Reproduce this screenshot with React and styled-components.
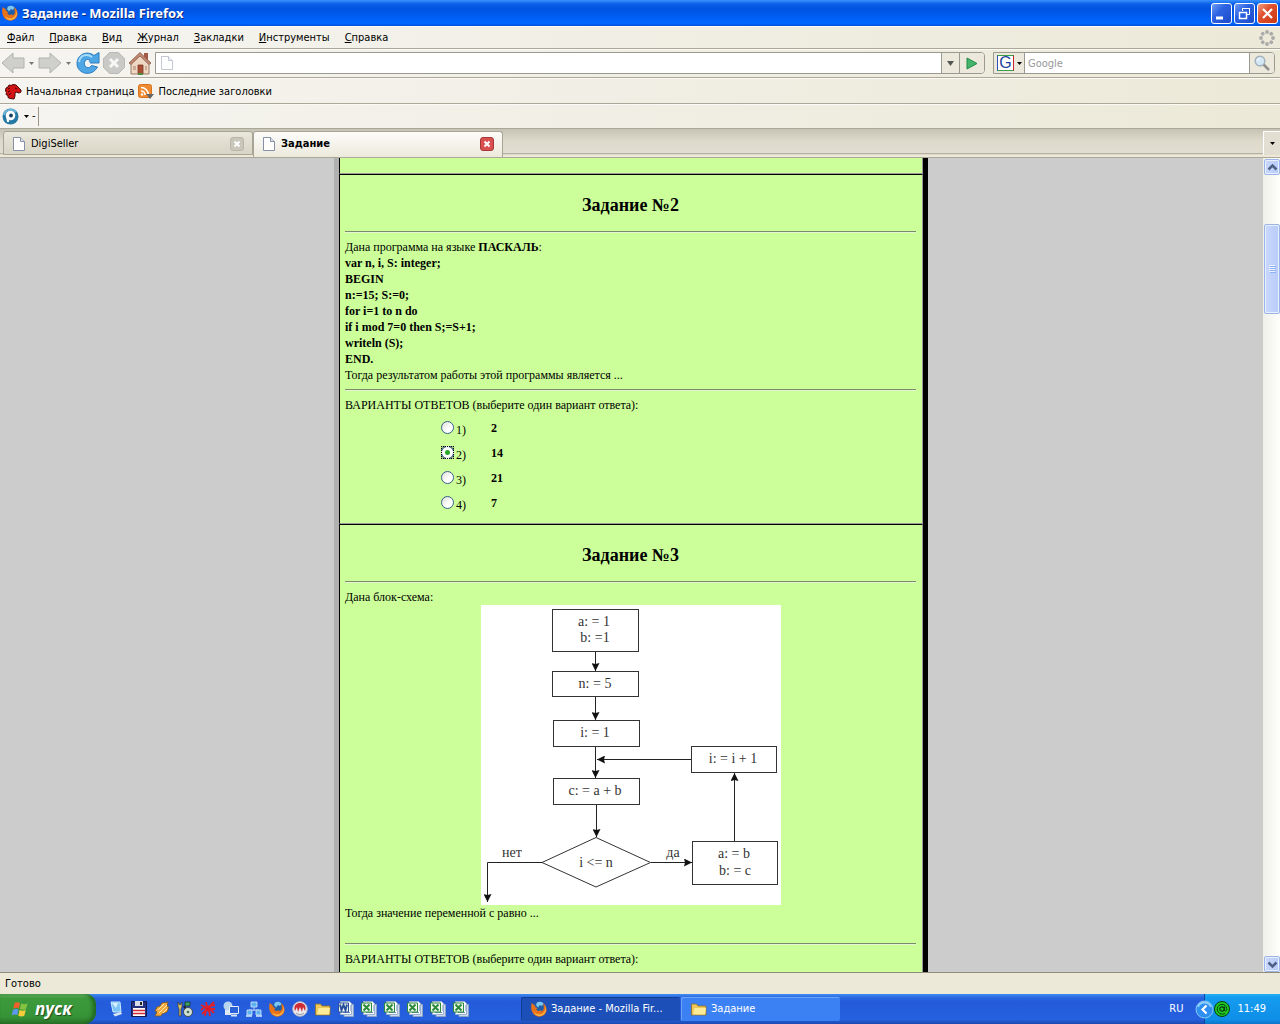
import React from 'react';
import styled, { createGlobalStyle, css } from 'styled-components';

const tasks = [
  { id: 2, options: ['2', '14', '21', '7'] },
  { id: 3, options: [] },
];

const menuItems = ['Файл', 'Правка', 'Вид', 'Журнал', 'Закладки', 'Инструменты', 'Справка'];

const program = [
  'var n, i, S: integer;',
  'BEGIN',
  'n:=15; S:=0;',
  'for i=1 to n do',
  'if i mod 7=0 then S;=S+1;',
  'writeln (S);',
  'END.',
];

const App = () => (
  <Window>
    <GlobalStyle />
    <TitleBar>
      <FirefoxIcon />
      <WindowTitle>Задание - Mozilla Firefox</WindowTitle>
      <WindowButton aria-label="Свернуть">
        <svg width="21" height="21">
          <path d="M5 15h7" stroke="#fff" strokeWidth="3" />
        </svg>
      </WindowButton>
      <WindowButton aria-label="Восстановить">
        <svg width="21" height="21" fill="none" stroke="#fff">
          <path d="M8.5 8V5.5h7v6H13M8 5.5h8" />
          <path d="M5.5 9.5h7v6h-7zM5 9.5h8" strokeWidth="1.5" />
        </svg>
      </WindowButton>
      <WindowButton $close aria-label="Закрыть">
        <svg width="21" height="21">
          <path d="M6 6l9 9M15 6l-9 9" stroke="#fff" strokeWidth="2.2" />
        </svg>
      </WindowButton>
    </TitleBar>

    <MenuBar>
      {menuItems.map(item => (
        <MenuButton key={item}>
          <u>{item[0]}</u>
          {item.slice(1)}
        </MenuButton>
      ))}
      <Throbber />
    </MenuBar>

    <NavBar>
      <IconButton aria-label="Назад">
        <BackIcon />
      </IconButton>
      <CaretButton aria-label="История назад">
        <Caret color="#777" />
      </CaretButton>
      <IconButton aria-label="Вперёд">
        <BackIcon forward />
      </IconButton>
      <CaretButton aria-label="История вперёд">
        <Caret color="#777" />
      </CaretButton>
      <NavIcons>
        <IconButton aria-label="Обновить">
          <ReloadIcon />
        </IconButton>
        <IconButton aria-label="Остановить">
          <StopIcon />
        </IconButton>
        <IconButton aria-label="Домой">
          <HomeIcon />
        </IconButton>
      </NavIcons>
      <AddressBox>
        <PageIcon faded />
        <FieldInput aria-label="Адрес" />
        <FieldButton $width={18} aria-label="Список адресов">
          <Caret color="#555" wide />
        </FieldButton>
        <FieldButton $width={25} aria-label="Переход">
          <svg width="12" height="13">
            <path d="M1 1l10 5.5L1 12z" fill="#45b56b" stroke="#218a48" />
          </svg>
        </FieldButton>
      </AddressBox>
      <SearchBox>
        <EngineButton aria-label="Поисковая система">
          <GoogleMark>G</GoogleMark>
          <Caret color="#000" />
        </EngineButton>
        <FieldInput placeholder="Google" aria-label="Поиск" />
        <FieldButton $width={25} aria-label="Найти">
          <SearchIcon />
        </FieldButton>
      </SearchBox>
    </NavBar>

    <BookmarksBar>
      <Bookmark href="#home">
        <DragonIcon />
        Начальная страница
      </Bookmark>
      <Bookmark href="#news">
        <FeedIcon />
        Последние заголовки
      </Bookmark>
    </BookmarksBar>

    <ExtensionBar>
      <IconButton aria-label="Панель">
        <PandaIcon />
      </IconButton>
      <Caret color="#000" />
      <span>-</span>
      <Divider />
    </ExtensionBar>

    <TabStrip>
      <Tab>
        <PageIcon />
        <TabButton>DigiSeller</TabButton>
        <TabClose aria-label="Закрыть DigiSeller">
          <CrossIcon />
        </TabClose>
      </Tab>
      <Tab $active>
        <PageIcon />
        <TabButton>Задание</TabButton>
        <TabClose $active aria-label="Закрыть Задание">
          <CrossIcon />
        </TabClose>
      </Tab>
      <AllTabs aria-label="Все вкладки">
        <Caret color="#000" />
      </AllTabs>
    </TabStrip>

    <Viewport>
      <Page>
        <Sheet>
          <PreviousTask />
          <Task>
            <TaskTitle>Задание №{tasks[0].id}</TaskTitle>
            <Rule />
            <p>
              Дана программа на языке <b>ПАСКАЛЬ</b>:
            </p>
            {program.map(line => (
              <p key={line}>
                <b>{line}</b>
              </p>
            ))}
            <p>Тогда результатом работы этой программы является ...</p>
            <Rule />
            <p>ВАРИАНТЫ ОТВЕТОВ (выберите один вариант ответа):</p>
            <Options>
              {tasks[0].options.map((option, i) => (
                <Option key={option}>
                  <Radio name="task2" value={option} defaultChecked={i === 1} />
                  <OptionNumber>{i + 1})</OptionNumber>
                  <b>{option}</b>
                </Option>
              ))}
            </Options>
          </Task>
          <Task>
            <TaskTitle>Задание №{tasks[1].id}</TaskTitle>
            <Rule />
            <p>Дана блок-схема:</p>
            <Flowchart />
            <p>Тогда значение переменной с равно ...</p>
            <br />
            <Rule />
            <p>ВАРИАНТЫ ОТВЕТОВ (выберите один вариант ответа):</p>
          </Task>
        </Sheet>
      </Page>
      <ScrollBar>
        <ScrollButton aria-label="Вверх">
          <Chevron d="M3.500 9.500l4-4 4 4" />
        </ScrollButton>
        <ScrollTrack>
          <ScrollThumb>
            <svg width="7" height="8" stroke="#eef4fe">
              <path d="M0 .5h6M0 2.500h6M0 4.500h6M0 6.500h6" />
              <path d="M1 1.500h6M1 3.500h6M1 5.500h6M1 7.500h6" stroke="#8cb0f8" />
            </svg>
          </ScrollThumb>
        </ScrollTrack>
        <ScrollButton aria-label="Вниз">
          <Chevron d="M3.500 5.500l4 4 4-4" />
        </ScrollButton>
      </ScrollBar>
    </Viewport>

    <StatusBar>Готово</StatusBar>

    <TaskBar>
      <StartButton>
        <WindowsFlag />
        пуск
      </StartButton>
      <QuickLaunch>
        <DesktopIcon />
        <FloppyIcon />
        <WinampIcon />
        <ToolsIcon />
        <SpiderIcon />
        <RemoteIcon />
        <NetworkIcon />
        <FirefoxIcon />
        <NeroIcon />
        <FolderIcon />
        <OfficeIcon color="#2a4f9c" mark="M2 3.5l1.5 5.500 2-5 2 5L9 3.500" />
        {[0, 1, 2, 3, 4].map(i => (
          <OfficeIcon key={i} color="#2d8a3a" mark="M2.500 3.500l6 6M8.500 3.500l-6 6" />
        ))}
      </QuickLaunch>
      <TaskButton $active>
        <FirefoxIcon />
        <span>Задание - Mozilla Fir...</span>
      </TaskButton>
      <TaskButton>
        <FolderIcon />
        <span>Задание</span>
      </TaskButton>
      <Language>RU</Language>
      <Tray>
        <TrayToggle aria-label="Показать значки">
          <svg width="19" height="19" fill="none">
            <circle cx="9.5" cy="9.5" r="8.5" fill="#2f8ff0" stroke="#8cc8fa" />
            <path d="M3 7a7 7 0 0 1 13 0" stroke="#8ccdfc" strokeWidth="2" />
            <path d="M11.5 5.5l-4 4 4 4" stroke="#fff" strokeWidth="2.2" />
          </svg>
        </TrayToggle>
        <AgentIcon />
        <span>11:49</span>
      </Tray>
    </TaskBar>
  </Window>
);

export default App;

/* Icons */

const Caret = ({ color, wide }) => (
  <svg width="7" height="5">
    <path d={wide ? 'M0 0h7L3.5 5z' : 'M1 1h5L3.5 4z'} fill={color} />
  </svg>
);

const Chevron = ({ d }) => (
  <svg width="15" height="15" fill="none" stroke="#4d6185" strokeWidth="2.5">
    <path d={d} />
  </svg>
);

const CrossIcon = () => (
  <svg width="8" height="8">
    <path d="M1.5 1.5l5 5M6.5 1.5l-5 5" stroke="#fff" strokeWidth="2" />
  </svg>
);

const FirefoxIcon = () => (
  <svg width="16" height="16">
    <circle cx="8.5" cy="7" r="6.5" fill="#1f5fa8" />
    <path d="M6 1.500c2-1.500 5-1 6.500 1L11 5 9 4 7 6.500 5 4z" fill="#7cc6f2" />
    <path
      d="M.8 1.500C1.500 3 2 3 3 3.500L4.500 6c.5 1 1.500.8 2 1.300L5.300 8c.5 2 2.700 2.500 4.200 1.200 1 .2 1 .8.4 1.300 2.400-.2 3.400-2.500 2.700-5.500 0-1.500-.3-2.500-.8-3.200 3.900 2.600 5 7.800 2.300 11.100-3.500 3.900-9 3.600-12-.4C-.2 9.500-.2 5 .8 1.500z"
      fill="#e8711a"
    />
    <path d="M14 5c1 4-1 8-5 8.500-3 .4-5-1-6-3 .5 4 5 5.500 8.500 3.500C15 12 15.500 8 14 5z" fill="#f9c44c" />
  </svg>
);

const Throbber = () => (
  <ThrobberSvg width="16" height="16" fill="#aaa">
    {[0, 45, 90, 135, 180, 225, 270, 315].map(a => (
      <circle key={a} cx="8" cy="2" r="1.9" transform={`rotate(${a} 8 8)`} />
    ))}
  </ThrobberSvg>
);

const BackIcon = ({ forward }) => (
  <svg width="24" height="22">
    <path
      d="M1 11L12 1v5h11v10H12v5z"
      fill="#cfcfcb"
      stroke="#b3b3ae"
      transform={forward ? 'matrix(-1 0 0 1 24 0)' : undefined}
    />
  </svg>
);

const ReloadIcon = () => (
  <svg width="24" height="24">
    <path
      d="M18 4.5C11-1 1 3.500 1 12.500 1 23 16 26.500 21.500 16l-6-1.500c-2 3.500-7 2.500-7-2 0-4 3.500-5 5.500-3L11.500 12H23V1.500z"
      fill="#4fa6e4"
      stroke="#2a7cc0"
    />
    <path d="M3 11C4 4 11 2 16 6" stroke="#a8dcf8" strokeWidth="2" fill="none" />
    <circle cx="11.5" cy="12.5" r="2.5" fill="#eef4f8" />
  </svg>
);

const StopIcon = () => (
  <svg width="24" height="24">
    <path d="M7.5 1.500h9l6 6v9l-6 6h-9l-6-6v-9z" fill="#c9c9c6" stroke="#b9b9b5" />
    <path d="M8 8l8 8M16 8l-8 8" stroke="#f7f7f5" strokeWidth="3" />
  </svg>
);

const HomeIcon = () => (
  <svg width="24" height="24">
    <path d="M16 2h4v7h-4z" fill="#a55a48" />
    <path d="M3 11l9-8 9 8v12H3z" fill="#eed8c4" stroke="#9a7a68" />
    <path d="M1 12L12 1.500 23 12l-2 1.500-9-8.500-9 8.500z" fill="#c08872" stroke="#8d5a48" strokeWidth=".8" />
    <path d="M10 14h5v9h-5z" fill="#a84e35" stroke="#7e3a28" strokeWidth=".8" />
    <path d="M5 15h3v4H5zM17 15h2v4h-2z" fill="#c9ab96" />
    <path d="M10 23h5" stroke="#4d8a42" strokeWidth="2" />
  </svg>
);

const PageIcon = ({ faded }) => (
  <svg width="12" height="14" opacity={faded ? 0.5 : 1}>
    <path d="M.5.5h7l4 4v9H.5z" fill="#fff" stroke="#8791a5" />
    <path d="M7.5.5v4h4" fill="#dde3ee" stroke="#8791a5" />
  </svg>
);

const SearchIcon = () => (
  <svg width="16" height="16">
    <path d="M9 9l6 6" stroke="#8f8f8c" strokeWidth="2.5" />
    <circle cx="6" cy="6" r="4.8" fill="#d3e7f5" stroke="#a3b1bb" strokeWidth="1.4" />
    <path d="M3.5 6A2.500 2.500 0 0 1 6 3.500" stroke="#fff" fill="none" />
  </svg>
);

const DragonIcon = () => (
  <svg width="17" height="16">
    <path
      d="M1 4l2-1 1-2 2 .5L8 .5l3 .5 2 2 3 3v2l-2 1-3-1-1 1v3l-1 3-4-.5-2-1v-2l-2-1 .5-2L.5 7z"
      fill="#d41414"
      stroke="#4a0505"
    />
    <path d="M3 5l2-1M3 8l2-1M4 11l2-2M10 4l2 1" stroke="#400" fill="none" />
  </svg>
);

const FeedIcon = () => (
  <svg width="16" height="16" fill="none">
    <rect x=".5" y=".5" width="13" height="13" rx="2" fill="#f08a30" stroke="#d87320" />
    <path d="M3 7a4 4 0 0 1 4 4M3 3.500A7.500 7.500 0 0 1 10.500 11" stroke="#fff" strokeWidth="1.600" />
    <circle cx="4" cy="10.5" r="1.2" fill="#fff" />
    <path d="M8 10h8l-4 5z" fill="#666" />
  </svg>
);

const PandaIcon = () => (
  <svg width="17" height="17">
    <circle cx="8.5" cy="8.5" r="8" fill="#2679a5" />
    <path d="M2 7a7 7 0 0 1 12-3" stroke="#6bb8dc" strokeWidth="2" fill="none" />
    <circle cx="8.5" cy="7.5" r="4.8" fill="#fff" />
    <path d="M4 7h3v7H5z" fill="#fff" />
    <circle cx="9" cy="7.5" r="1.9" fill="#17415e" />
  </svg>
);

const WindowsFlag = () => (
  <svg width="18" height="17">
    <path d="M3.5 2C5.500.7 7 1 9 2L7.800 7.500C6 6.700 4.300 6.500 2.200 7.800z" fill="#f0602c" />
    <path d="M10 2.500c2 1 4 1 6.500 0L15 8.200c-2.200 1-4 .8-6.200-.2z" fill="#86c340" />
    <path d="M2 8.800C4 7.700 5.700 7.700 7.500 8.500L6.200 14C4.500 13.200 2.800 13.200.8 14.200z" fill="#5c98ee" />
    <path d="M8.600 9c2.200 1 4 1 6.200 0l-1.500 5.800c-2 1-4 .8-6-.2z" fill="#f8cc3a" />
  </svg>
);

const DesktopIcon = () => (
  <svg width="16" height="16">
    <path d="M3 1h9l1 10H5z" fill="#7cc5f5" stroke="#c9eafd" />
    <path d="M5 13l8-2 1 2-7 2.500z" fill="#d8e6f2" />
    <path d="M4 2l6 0-2 5z" fill="#d6f0ff" />
  </svg>
);

const FloppyIcon = () => (
  <svg width="16" height="16">
    <path d="M.5.5h15v15H.5z" fill="#25307e" stroke="#111b50" />
    <path d="M4 0h8v5H4z" fill="#d9dce6" />
    <path d="M9 1h2v3H9z" fill="#222" />
    <path d="M2 7h12v8H2z" fill="#fff" />
    <path d="M2 9.500h12M2 12.500h12" stroke="#d12b35" strokeWidth="1.5" />
  </svg>
);

const WinampIcon = () => (
  <svg width="16" height="16">
    <path d="M8 2l6-1-1 4 2 1-2 5-5 2-1 2-6 0 2-4-2-1 2-4 3-1z" fill="#f6a93c" stroke="#74551f" strokeWidth=".8" />
    <path d="M10 3L4 9M13 4l-8 8M13 8l-4 4" stroke="#fdebb0" />
  </svg>
);

const ToolsIcon = () => (
  <svg width="16" height="16">
    <path d="M1 1l2 3 2-3v5L4 8v7H2V8L1 6z" fill="#d4c56d" stroke="#333" strokeWidth=".7" />
    <path d="M8 1h5v4H8z" fill="#3aa356" stroke="#222" strokeWidth=".7" />
    <path d="M7 5l3 6" stroke="#222" strokeWidth="2" />
    <circle cx="11" cy="11" r="4.5" fill="#cfe0d4" stroke="#333" strokeWidth=".8" />
    <circle cx="11" cy="11" r="1.3" fill="#4c6a55" />
  </svg>
);

const SpiderIcon = () => (
  <svg width="16" height="16" fill="none" stroke="#e0202a" strokeWidth="1.8">
    <path d="M1 4l4 2-4 3M6 1l1 5M14 1l-4 4 5-1M2 13l4-4-1 6M9 9l1 6M14 12l-4-4 5 0" />
    <circle cx="8" cy="7.5" r="2" fill="#c8141e" />
  </svg>
);

const RemoteIcon = () => (
  <svg width="16" height="16">
    <circle cx="5" cy="5" r="4.5" fill="#b9d4f0" />
    <path d="M2 9h6v5H2z" fill="#dce8f5" />
    <path d="M6.5 5.500h9v7h-9z" fill="#2a62d8" stroke="#e5eefa" />
    <path d="M8 14.500h6" stroke="#dbe6f3" strokeWidth="2" />
  </svg>
);

const NetworkIcon = () => (
  <svg width="16" height="16" stroke="#d6e9fb" strokeWidth=".8">
    <path d="M8 6v4M3 12V9h10v3" fill="none" />
    <path d="M5 1h6v5H5zM1 9h5v5H1zM10 9h5v5h-5z" fill="#5db1ee" />
    <path d="M0 15h6M10 15h6" strokeWidth="1.5" />
  </svg>
);

const NeroIcon = () => (
  <svg width="16" height="16">
    <circle cx="8" cy="8" r="7.3" fill="#e9e9ee" stroke="#b8b8c4" />
    <path d="M3 10c-2-6 2-8 5-8s7 2 5 8l-2-4-1 5-2-5-2 5-1-5z" fill="#d02a35" />
    <path d="M4 12c2 2 6 2 8 0" stroke="#9a9aa8" fill="none" />
  </svg>
);

const FolderIcon = () => (
  <svg width="16" height="16">
    <path d="M.5 14V3h5L7 5h8v9z" fill="#f0c85a" stroke="#8f7022" strokeWidth=".8" />
    <path d="M2 13.500L3.500 7H15l-1 6.500z" fill="#fdeb97" />
  </svg>
);

const OfficeIcon = ({ color, mark }) => (
  <svg width="16" height="16" fill="none">
    <path d="M6 3.500h9.500v12H6z" fill="#c9daf2" stroke="#8aa2c4" />
    <path d="M2.500.5h9l2 2v11h-11z" fill="#f7fafe" stroke="#9cb0cc" />
    <path d="M12 5h1M12 7h1M12 9h1M5 11.500h7" stroke="#6d8fc0" />
    <path d="M.5 2h10v9H.5z" fill="#eef6ec" stroke={color} />
    <path d={mark} stroke={color} strokeWidth="2" />
  </svg>
);

const AgentIcon = () => (
  <svg width="16" height="16" fill="none">
    <circle cx="8" cy="8" r="7.5" fill="#1fc825" stroke="#063f08" />
    <circle cx="8" cy="8" r="2.2" stroke="#053c07" strokeWidth="1.2" />
    <path d="M10.5 5.500v4c1 1.500 2.500 0 2.200-2C12 2 4 2 3.300 7.500 3 12.500 7.500 14 11 12.500" stroke="#053c07" />
  </svg>
);

const Box = ({ x, y, w = 86, h = 26 }) => <rect x={x} y={y} width={w} height={h} fill="none" />;

const Arrow = ({ d }) => <path d={d} stroke="#222" fill="none" markerEnd="url(#arrow)" />;

const Flowchart = () => (
  <Chart width="300" height="300" role="img" aria-label="Блок-схема">
    <defs>
      <marker id="arrow" markerWidth="9" markerHeight="8" refX="8" refY="4" orient="auto" markerUnits="userSpaceOnUse">
        <path d="M0 0l8 4-8 4 1-4z" fill="#111" />
      </marker>
    </defs>
    <g stroke="#333">
      <Box x="71.5" y="4.5" h={42} />
      <Box x="71.5" y="66.5" h={25} />
      <Box x="72.5" y="115.5" />
      <Box x="72.5" y="173.5" />
      <Box x="210.5" y="141.5" w={85} />
      <Box x="211.5" y="236.5" w={85} h={43} />
      <path d="M115 232.5l54.5 25-54.5 24.5-54-24.500z" fill="none" />
    </g>
    <Arrow d="M114.5 47v19" />
    <Arrow d="M114.5 92v23" />
    <Arrow d="M114.5 142v31" />
    <Arrow d="M115.5 200v32" />
    <Arrow d="M210 154.5h-94" />
    <Arrow d="M170 257.5h41" />
    <Arrow d="M253.5 236v-68" />
    <Arrow d="M61 257.5H6.500V297" />
    <text x="113" y="21">a: = 1</text>
    <text x="114" y="37">b: =1</text>
    <text x="114" y="83">n: = 5</text>
    <text x="114" y="132">i: = 1</text>
    <text x="114" y="190">c: = a + b</text>
    <text x="252" y="158">i: = i + 1</text>
    <text x="253" y="253">a: = b</text>
    <text x="254" y="270">b: = c</text>
    <text x="115" y="262">i &lt;= n</text>
    <text x="31" y="252">нет</text>
    <text x="192" y="252">да</text>
  </Chart>
);

/* Layout */

const GlobalStyle = createGlobalStyle`
  * {
    box-sizing: border-box;
  }

  body {
    margin: 0;
    font: 11px/14px "DejaVu Sans Condensed", "Noto Sans", sans-serif;
    color: #000;
  }

  button,
  input {
    margin: 0;
    padding: 0;
    border: 0;
    background: none;
    font: inherit;
    color: inherit;
  }

  svg {
    display: block;
    flex: none;
  }

  p {
    margin: 0;
  }
`;

const Window = styled.div`
  display: flex;
  flex-direction: column;
  height: 100vh;
  overflow: hidden;
  background: #ece9d8;
`;

const TitleBar = styled.header`
  display: flex;
  align-items: center;
  gap: 2px;
  height: 26px;
  padding: 0 2px;
  background: linear-gradient(#3a93ff, #0a5fe8 15%, #0053e0 35%, #0062fa 75%, #0066ff 90%, #0050d8);
`;

const WindowTitle = styled.h1`
  flex: 1;
  margin: 0;
  padding-left: 2px;
  font: bold 13px/18px "Noto Sans", sans-serif;
  color: #fff;
  text-shadow: 1px 1px #0a2a80;
`;

const WindowButton = styled.button`
  width: 21px;
  height: 21px;
  border: 1px solid #fff;
  border-radius: 3px;
  background: ${props =>
    props.$close
      ? 'linear-gradient(135deg, #f0a088, #e0502c 40%, #c83a14)'
      : 'linear-gradient(135deg, #6f9cf5, #2c62e2 40%, #1c4cc8)'};

  svg {
    margin: -1px;
  }
`;

const barSurface = css`
  display: flex;
  align-items: center;
  border-bottom: 1px solid #aca899;
  box-shadow: inset 0 1px #fbfaf7;
  background: linear-gradient(to right, #f5f4f0, #ece9d8);
`;

const MenuBar = styled.nav`
  ${barSurface}
  height: 23px;
  padding: 1px 5px 0 7px;
  gap: 15px;
`;

const MenuButton = styled.button`
  line-height: 14px;
`;

const ThrobberSvg = styled.svg`
  margin-left: auto;
`;

const NavBar = styled.div`
  ${barSurface}
  height: 29px;
  padding: 0 5px 0 1px;
`;

const NavIcons = styled.div`
  display: flex;
  gap: 2px;
  padding: 0 3px 0 1px;
`;

const IconButton = styled.button`
  flex: none;
`;

const CaretButton = styled.button`
  display: flex;
  justify-content: center;
  width: 13px;
`;

const FieldBox = styled.div`
  display: flex;
  align-items: center;
  height: 22px;
  border: 1px solid #9a9a90;
  border-radius: 0 4px 4px 0;
  background: #fff;
  overflow: hidden;
`;

const AddressBox = styled(FieldBox)`
  flex: 1;
  margin-right: 8px;
  padding-left: 5px;
`;

const SearchBox = styled(FieldBox)`
  width: 282px;
`;

const FieldInput = styled.input`
  flex: 1;
  min-width: 0;
  padding: 1px 3px 0;
  outline: 0;

  &::placeholder {
    color: #999;
    opacity: 1;
  }
`;

const FieldButton = styled.button`
  display: flex;
  align-items: center;
  justify-content: center;
  width: ${props => props.$width}px;
  height: 20px;
  border-left: 1px solid #9a9a90;
  background: #ece9dc;
`;

const EngineButton = styled.button`
  display: flex;
  align-items: center;
  gap: 2px;
  width: 31px;
  height: 20px;
  padding-left: 3px;
  border-right: 1px solid #9a9a90;
  background: #ece9dc;
`;

const GoogleMark = styled.span`
  width: 17px;
  height: 16px;
  border: 1px solid;
  border-color: #3a9c48 #c8202c #3a9c48 #2a52b8;
  background: #fff;
  font: 16px/14px "Liberation Sans", sans-serif;
  color: #1c3f9c;
`;

const BookmarksBar = styled.nav`
  ${barSurface}
  gap: 4px;
  height: 26px;
  padding: 2px 5px 0;
`;

const Bookmark = styled.a`
  display: flex;
  align-items: center;
  gap: 4px;
  color: #000;
  text-decoration: none;
`;

const ExtensionBar = styled.div`
  ${barSurface}
  gap: 2px;
  height: 25px;
  padding-left: 2px;

  button {
    margin-right: 2px;
  }
`;

const Divider = styled.span`
  width: 1px;
  height: 19px;
  background: #9a978a;
`;

const TabStrip = styled.div`
  display: flex;
  align-items: flex-end;
  height: 29px;
  padding-left: 3px;
  border-bottom: 1px solid #aca899;
  background: linear-gradient(#c6c3b4, #dcd9ca 40%, #e2dfd2 85%, #aca899 88%, #ece9d8 92%);
`;

const Tab = styled.div`
  display: flex;
  align-items: center;
  gap: 6px;
  flex: 0 1 250px;
  height: ${props => (props.$active ? '26px' : '24px')};
  margin-bottom: ${props => (props.$active ? '0' : '2px')};
  padding: ${props => (props.$active ? '0 8px 2px 9px' : '1px 8px 0 9px')};
  border: 1px solid #a8a596;
  border-bottom-width: ${props => (props.$active ? '0' : '1px')};
  border-radius: 3px 3px 0 0;
  background: ${props =>
    props.$active ? 'linear-gradient(#fdfcfa, #ece9dc)' : 'linear-gradient(#eae7db, #d8d5c6)'};
  font-weight: ${props => (props.$active ? 'bold' : 'normal')};
`;

const TabButton = styled.button`
  flex: 1;
  text-align: left;
`;

const TabClose = styled.button`
  display: flex;
  align-items: center;
  justify-content: center;
  width: 14px;
  height: 14px;
  border: 1px solid ${props => (props.$active ? '#a83838' : '#bab7aa')};
  border-radius: 3px;
  background: ${props => (props.$active ? '#d95050' : '#c9c6ba')};
`;

const AllTabs = styled.button`
  display: flex;
  align-items: center;
  justify-content: center;
  width: 17px;
  height: 24px;
  margin: 0 0 2px auto;
  border: solid #fff;
  border-width: 1px 0 0 1px;
  background: #e2dfd2;
`;

const Viewport = styled.main`
  display: flex;
  flex: 1;
  min-height: 0;
`;

const Page = styled.div`
  flex: 1;
  padding-right: 1px;
  overflow: hidden;
  background: #ccc;
`;

const Sheet = styled.div`
  max-width: 594px;
  margin: 0 auto;
  border: solid #b0b0b0;
  border-right-color: #000;
  border-width: 0 5px;
  background: #cf9;
  font: 12px/16px "Liberation Serif", serif;
`;

const Task = styled.section`
  padding: 0 6px 8px 5px;
  border: 1px solid;
  border-color: #000 #999 #999 #000;
`;

const PreviousTask = styled(Task)`
  height: 16px;
  border-top: 0;
`;

const TaskTitle = styled.h2`
  margin: 0;
  padding: 20px 0 10px;
  font-size: 18px;
  line-height: 20px;
  text-align: center;
`;

const Rule = styled.hr`
  height: 2px;
  margin: 6px 0;
  border: 0;
  border-top: 1px solid #7a8a6a;
  border-bottom: 1px solid #e4f5d0;
`;

const Options = styled.div`
  padding: 2px 0 0 96px;
`;

const Option = styled.label`
  display: grid;
  grid-template-columns: 15px 35px auto;
  align-items: center;
  height: 25px;
`;

const OptionNumber = styled.span`
  padding-top: 4px;
`;

const Radio = styled.input.attrs({ type: 'radio' })`
  appearance: none;
  width: 13px;
  height: 13px;
  border: 1px solid #35608a;
  border-radius: 50%;
  background: linear-gradient(135deg, #dcdcd6, #fff 60%);

  &:checked {
    border: 1px dotted #000;
    border-radius: 0;
    background: radial-gradient(circle, #2aa82a 0 2px, #fff 3px 5px, #35608a 6px, #9cc070 7px);
  }
`;

const Chart = styled.svg`
  margin: 0 auto;
  background: #fff;

  text {
    font: 14px "Liberation Serif", serif;
    fill: #333;
    text-anchor: middle;
  }
`;

const ScrollBar = styled.div`
  display: flex;
  flex-direction: column;
  width: 17px;
  padding: 1px 0 0 1px;
  background: linear-gradient(to right, #f0f0ea, #fefefb);
`;

const scrollPart = css`
  display: flex;
  align-items: center;
  justify-content: center;
  border: 1px solid #9cb4ec;
  border-radius: 2px;
  box-shadow: inset 0 0 0 1px #e8effe;
  background: linear-gradient(to right, #c9d7fc, #b8cbf8);
`;

const ScrollButton = styled.button`
  ${scrollPart}
  width: 16px;
  height: 16px;
`;

const ScrollTrack = styled.div`
  flex: 1;
  padding-top: 49px;
`;

const ScrollThumb = styled.div`
  ${scrollPart}
  height: 90px;
`;

const StatusBar = styled.footer`
  height: 22px;
  padding: 4px 5px;
  border-top: 1px solid #8f8c7e;
  background: #ece9d8;
`;

const TaskBar = styled.footer`
  display: flex;
  align-items: center;
  height: 30px;
  background: linear-gradient(#3f8cf3, #2a66e0 12%, #245bdb 25%, #2560de 85%, #1c48b0);
  color: #fff;
`;

const StartButton = styled.button`
  display: flex;
  align-items: center;
  gap: 6px;
  width: 96px;
  height: 30px;
  padding-left: 11px;
  border-radius: 0 10px 12px 0;
  background: linear-gradient(#6fbf6f, #3c9a3c 15%, #379337 75%, #2a752a);
  box-shadow: inset -3px 0 4px #1f661f;
  font: italic bold 17px/20px "Open Sans", sans-serif;
  text-shadow: 1px 1px 1px #1c4a1c;
`;

const QuickLaunch = styled.div`
  display: flex;
  gap: 7px;
  padding: 0 52px 0 12px;
`;

const TaskButton = styled.button`
  display: flex;
  align-items: center;
  gap: 4px;
  flex: 0 1 159px;
  min-width: 0;
  height: 24px;
  margin-right: 1px;
  padding: 0 10px;
  border-radius: 2px;
  background: ${props => (props.$active ? '#1c4fb8' : '#3c81f3')};
  box-shadow: inset 1px 1px ${props => (props.$active ? '#143c94' : '#6aa2fa')};
  color: #fff;
  white-space: nowrap;
`;

const Language = styled.span`
  margin-left: auto;
  padding-right: 21px;
`;

const Tray = styled.div`
  display: flex;
  align-items: center;
  height: 30px;
  padding-right: 14px;
  border-left: 1px solid #12489c;
  background: linear-gradient(#24b0f8, #149bee 12%, #0f8fe8 85%, #0d74c8);

  span {
    padding-left: 7px;
  }
`;

const TrayToggle = styled.button`
  margin-left: -10px;
`;
